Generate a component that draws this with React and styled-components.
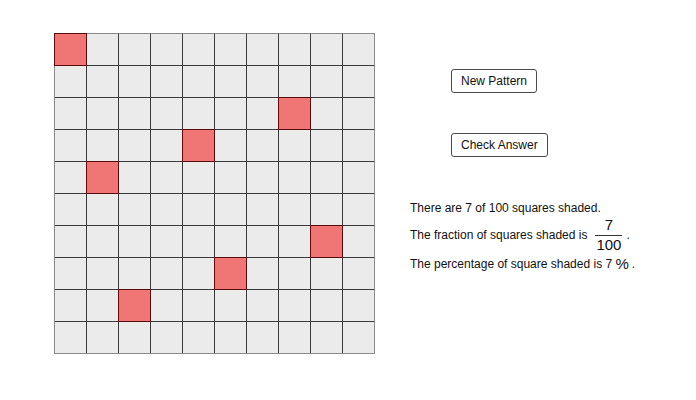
import styled, { createGlobalStyle } from 'styled-components'

const GlobalStyle = createGlobalStyle`
  body {
    margin: 0;
    background: #ffffff;
    font-family: "Liberation Sans", Arial, sans-serif;
  }
`;

const Page = styled.div`
  display: flex;
  width: 696px;
  height: 400px;
  box-sizing: border-box;
  padding: 33px 0 0 54px;
  background: #ffffff;
`;

const Board = styled.div`
  display: grid;
  grid-template-columns: repeat(10, 31px);
  grid-auto-rows: 31px;
  gap: 1px;
  align-self: flex-start;
  background: #3a3a3a;
  border: 1px solid #8a8a8a;
`;

const Cell = styled.div`
  background: ${p => (p.$shaded ? '#f07676' : '#ebebeb')};
  box-shadow: ${p => (p.$shaded ? '0 0 0 1px #5a0a0a' : 'none')};
  position: relative;
  z-index: ${p => (p.$shaded ? 1 : 0)};
`;

const Side = styled.div`
  display: flex;
  flex-direction: column;
  margin-left: 35px;
  padding-top: 36px;
`;

const Buttons = styled.div`
  display: flex;
  flex-direction: column;
  align-items: flex-start;
  gap: 40px;
  padding-left: 41px;
`;

const Button = styled.button`
  height: 24px;
  padding: 0 9px;
  border: 1px solid #4a4a4a;
  border-radius: 3px;
  background: #ffffff;
  color: #111;
  font-family: "Liberation Sans", Arial, sans-serif;
  font-size: 12px;
  cursor: pointer;
`;

const Info = styled.div`
  display: flex;
  flex-direction: column;
  margin-top: 44px;
  font-size: 12px;
  color: #111;
`;

const Line = styled.div`
  display: flex;
  align-items: center;
  height: ${p => p.$h || 14}px;
  white-space: pre;
`;

const Fraction = styled.span`
  display: inline-flex;
  flex-direction: column;
  align-items: center;
  margin: 0 4px 0 8px;
  font-size: 15px;
  line-height: 16px;
`;

const Numerator = styled.span`
  align-self: stretch;
  text-align: center;
  padding-bottom: 2px;
  border-bottom: 1px solid #333;
`;

const Denominator = styled.span`
  padding: 1px 1px 0;
`;

const Percent = styled.span`
  font-size: 15px;
  margin: 0 3px 0 0;
  position: relative;
  top: -1px;
`;

const shaded = [0, 27, 34, 41, 68, 75, 82];

const App = () => {
  return (
    <>
      <GlobalStyle />
      <Page>
        <Board>
          {Array.from({ length: 100 }, (_, i) => (
            <Cell key={i} $shaded={shaded.includes(i)} />
          ))}
        </Board>
        <Side>
          <Buttons>
            <Button>New Pattern</Button>
            <Button>Check Answer</Button>
          </Buttons>
          <Info>
            <Line>There are 7 of 100 squares shaded.</Line>
            <Line $h={40}>
              <span>The fraction of squares shaded is</span>
              <Fraction>
                <Numerator>7</Numerator>
                <Denominator>100</Denominator>
              </Fraction>
              <span>.</span>
            </Line>
            <Line $h={18}>
              <span>The percentage of square shaded is 7 </span>
              <Percent>%</Percent>
              <span>.</span>
            </Line>
          </Info>
        </Side>
      </Page>
    </>
  )
}

export default App
